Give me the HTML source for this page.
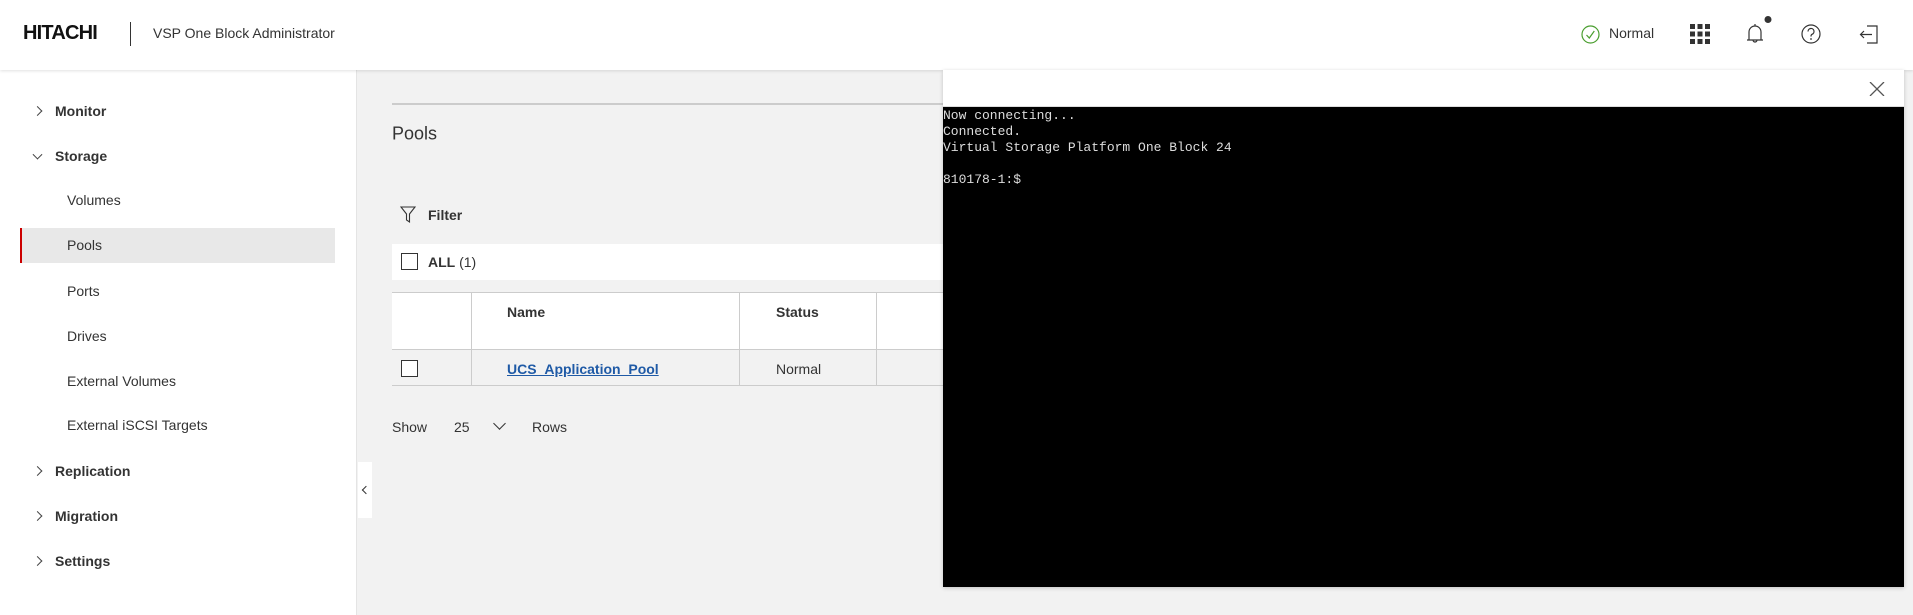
<!DOCTYPE html>
<html><head><meta charset="utf-8"><style>
*{margin:0;padding:0;box-sizing:border-box}
body{width:1913px;height:615px;overflow:hidden;background:#f2f2f2;font-family:"Liberation Sans",sans-serif;color:#333;position:relative}
.abs{position:absolute}
.hdr{left:0;top:0;width:1913px;height:70px;background:#fff;box-shadow:0 1px 3px rgba(0,0,0,.12);z-index:2}
.side{left:0;top:70px;width:357px;height:545px;background:#fff;border-right:1px solid #e4e4e4}
.nav{position:absolute;font-size:14px;color:#222;transform:translateY(-50%)}
.top{left:55px;font-weight:bold;color:#333}
.sub{left:67px;color:#333}
.chev{position:absolute;left:34px;width:7px;height:7px;border-right:1.3px solid #444;border-bottom:1.3px solid #444}
.r{transform:translateY(-50%) rotate(-45deg)}
.d{transform:translateY(-70%) rotate(45deg)}
.cb{position:absolute;width:17px;height:17px;border:1.5px solid #333;background:#fff}
.t{font-size:14px;transform:translateY(-50%)}
</style></head><body>
<div class="abs hdr">
  <div class="abs" style="left:23px;top:22px;font-size:20px;font-weight:bold;letter-spacing:-0.8px;color:#111">HITACHI</div>
  <div class="abs" style="left:130px;top:22px;width:1px;height:24px;background:#333"></div>
  <div class="abs" style="left:153px;top:25px;font-size:14px;color:#333">VSP One Block Administrator</div>
  <svg class="abs" style="left:1581px;top:25px" width="19" height="19" viewBox="0 0 19 19"><circle cx="9.5" cy="9.5" r="8.5" fill="none" stroke="#4a9e2f" stroke-width="1.2"/><path d="M5.5 10l2.8 3 5-7" fill="none" stroke="#4a9e2f" stroke-width="1.2"/></svg>
  <div class="abs" style="left:1609px;top:25px;font-size:14px;color:#333">Normal</div>
  <svg class="abs" style="left:1690px;top:24px" width="20" height="20" viewBox="0 0 20 20" fill="#333"><rect x="0" y="0" width="5" height="5"/><rect x="7.5" y="0" width="5" height="5"/><rect x="15" y="0" width="5" height="5"/><rect x="0" y="7.5" width="5" height="5"/><rect x="7.5" y="7.5" width="5" height="5"/><rect x="15" y="7.5" width="5" height="5"/><rect x="0" y="15" width="5" height="5"/><rect x="7.5" y="15" width="5" height="5"/><rect x="15" y="15" width="5" height="5"/></svg>
  <svg class="abs" style="left:1744px;top:14px" width="28" height="32" viewBox="0 0 28 32"><path d="M3 26h16M5 26v-8a6 6 0 0 1 12 0v8M11 12v-2M9 26a2 2 0 0 0 4 0" fill="none" stroke="#333" stroke-width="1.2"/><circle cx="24" cy="5.5" r="3.5" fill="#333"/></svg>
  <svg class="abs" style="left:1801px;top:24px" width="20" height="20" viewBox="0 0 20 20"><circle cx="10" cy="10" r="9" fill="none" stroke="#333" stroke-width="1.2"/><path d="M7 7.5a3 3 0 1 1 4 2.8c-1 .4-1 1-1 2.2" fill="none" stroke="#333" stroke-width="1.2"/><circle cx="10" cy="15" r=".9" fill="#333"/></svg>
  <svg class="abs" style="left:1859px;top:24px" width="20" height="20" viewBox="0 0 20 20"><path d="M8 2h10v17H8M13 10.5H2M5 7l-3.5 3.5L5 14" fill="none" stroke="#333" stroke-width="1.2"/></svg>
</div>
<div class="abs side">
  <div class="chev r" style="top:41px"></div><div class="nav top" style="top:41px">Monitor</div>
  <div class="chev d" style="top:86px"></div><div class="nav top" style="top:86px">Storage</div>
  <div class="nav sub" style="top:130px">Volumes</div>
  <div class="abs" style="left:20px;top:158px;width:315px;height:35px;background:#e8e8e8;border-left:2px solid #c00"></div>
  <div class="nav sub" style="top:175px">Pools</div>
  <div class="nav sub" style="top:221px">Ports</div>
  <div class="nav sub" style="top:266px">Drives</div>
  <div class="nav sub" style="top:311px">External Volumes</div>
  <div class="nav sub" style="top:355px">External iSCSI Targets</div>
  <div class="chev r" style="top:401px"></div><div class="nav top" style="top:401px">Replication</div>
  <div class="chev r" style="top:446px"></div><div class="nav top" style="top:446px">Migration</div>
  <div class="chev r" style="top:491px"></div><div class="nav top" style="top:491px">Settings</div>
</div>
<div class="abs" style="left:358px;top:462px;width:14px;height:56px;background:#fff"></div>
<div class="abs" style="left:363px;top:487px;width:6px;height:6px;border-left:1.3px solid #333;border-bottom:1.3px solid #333;transform:rotate(45deg)"></div>
<div class="abs" style="left:392px;top:103px;width:560px;height:1.5px;background:#ccc"></div>
<div class="abs t" style="left:392px;top:134px;font-size:18px;color:#333">Pools</div>
<svg class="abs" style="left:400px;top:206px" width="16" height="18" viewBox="0 0 16 18"><path d="M1 1h14l-5.5 7v8l-3-2V8z" fill="none" stroke="#333" stroke-width="1.1"/></svg>
<div class="abs t" style="left:428px;top:215px;font-weight:bold">Filter</div>
<div class="abs" style="left:392px;top:244px;width:560px;height:36px;background:#fff"></div>
<div class="cb" style="left:401px;top:253px"></div>
<div class="abs t" style="left:428px;top:262px"><b>ALL</b> (1)</div>
<div class="abs" style="left:392px;top:292px;width:560px;height:94px;border-top:1.5px solid #ccc;border-bottom:1.5px solid #ccc">
  <div class="abs" style="left:0;top:0;width:560px;height:57px;background:#fff;border-bottom:1.5px solid #ccc"></div>
  <div class="abs" style="left:79px;top:0;width:1px;height:93px;background:#ccc"></div>
  <div class="abs" style="left:347px;top:0;width:1px;height:93px;background:#ccc"></div>
  <div class="abs" style="left:484px;top:0;width:1px;height:93px;background:#ccc"></div>
  <div class="abs t" style="left:115px;top:19px;font-weight:bold">Name</div>
  <div class="abs t" style="left:384px;top:19px;font-weight:bold">Status</div>
  <div class="cb" style="left:9px;top:67px"></div>
  <div class="abs t" style="left:115px;top:76px;color:#1f5aa6;text-decoration:underline;font-weight:bold">UCS_Application_Pool</div>
  <div class="abs t" style="left:384px;top:76px">Normal</div>
</div>
<div class="abs t" style="left:392px;top:427px">Show</div>
<div class="abs t" style="left:454px;top:427px">25</div>
<div class="abs" style="left:495px;top:419px;width:9px;height:9px;border-right:1.5px solid #333;border-bottom:1.5px solid #333;transform:rotate(45deg)"></div>
<div class="abs t" style="left:532px;top:427px">Rows</div>
<div class="abs" style="left:943px;top:70px;width:961px;height:517px;background:#000;box-shadow:0 1px 4px rgba(0,0,0,.2);z-index:3">
  <div class="abs" style="left:0;top:0;width:961px;height:37px;background:#fff;border-bottom:1px solid #ddd"></div>
  <svg class="abs" style="left:926px;top:12px" width="16" height="14" viewBox="0 0 16 14"><path d="M1 0l14 14M15 0L1 14" stroke="#555" stroke-width="1.3"/></svg>
  <pre class="abs" style="left:0;top:38px;font-family:'Liberation Mono',monospace;font-size:13px;line-height:16px;color:#ddd">Now connecting...
Connected.
Virtual Storage Platform One Block 24

810178-1:$</pre>
</div>
</body></html>
